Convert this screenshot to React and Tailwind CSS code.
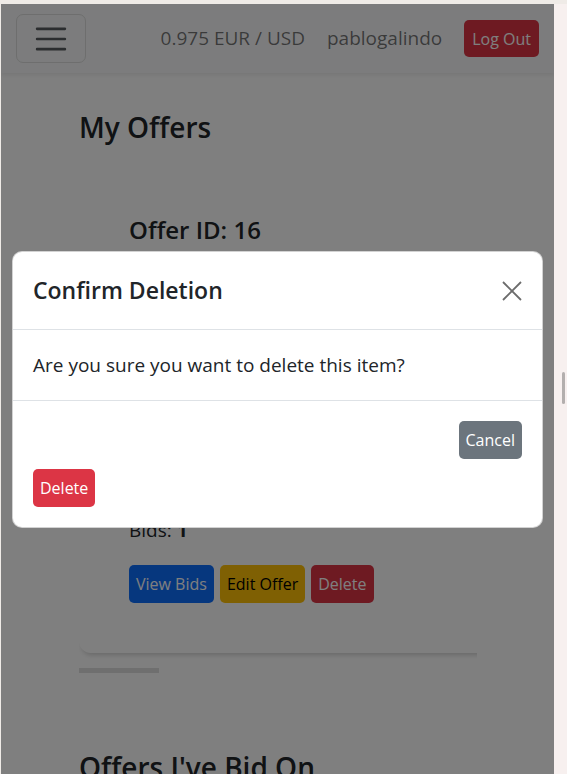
import React from 'react';

function Navbar() {
  return (
    <nav className="h-[69px] bg-[#f8f9fa] shadow-[0_2px_4px_rgba(0,0,0,0.08)] flex items-center px-[15px] relative z-10">
      <button className="w-[70px] h-[49px] border border-[#dcdcdc] rounded-[7px] flex items-center justify-center">
        <svg width="38" height="38" viewBox="0 0 30 30">
          <path d="M4 7h22M4 15h22M4 23h22" stroke="rgba(33,37,41,0.75)" strokeWidth="2" strokeLinecap="round" />
        </svg>
      </button>
      <div className="ml-auto flex items-center text-[19px] text-black/55">
        <span>0.975 EUR / USD</span>
        <span className="ml-[22px]">pablogalindo</span>
        <button className="ml-[22px] h-[37px] px-[8px] rounded-[5px] bg-[#dc3545] text-white text-[16px]">
          Log Out
        </button>
      </div>
    </nav>
  );
}

function OfferCard() {
  return (
    <div className="w-[398px] mt-[25px] pb-[8px] overflow-hidden">
      <div className="w-[440px] rounded-[12px] bg-white shadow-[0_5px_5px_-3px_rgba(0,0,0,0.18)] pt-[45px] pb-[50px] pl-[50px] text-[#212529]">
        <h5 className="text-[24px] font-semibold leading-[30px]">Offer ID: 16</h5>
        {/* offer details sit here, covered by the dialog */}
        <div className="h-[270px]" />
        <p className="text-[19px] leading-[30px]">
          Bids: <strong className="font-bold">1</strong>
        </p>
        <div className="mt-[20px] flex gap-[6px] text-[16px]">
          <button className="h-[38px] px-[7px] rounded-[5px] bg-[#0d6efd] text-white">View Bids</button>
          <button className="h-[38px] px-[7px] rounded-[5px] bg-[#ffc107] text-black">Edit Offer</button>
          <button className="h-[38px] px-[7px] rounded-[5px] bg-[#dc3545] text-white">Delete</button>
        </div>
      </div>
    </div>
  );
}

function Content() {
  return (
    <div className="px-[78px] text-[#212529]">
      <h3 className="mt-[37px] text-[28px] font-semibold leading-[35px]">My Offers</h3>
      <OfferCard />
      <div className="mt-[7px] w-[80px] h-[5px] bg-[#dedede]" />
      <h3 className="mt-[77px] text-[28px] font-semibold leading-[35px] whitespace-nowrap">Offers I've Bid On</h3>
    </div>
  );
}

function ConfirmModal() {
  return (
    <div className="bg-white border border-black/[0.175] rounded-[10px] text-[#212529]">
      <div className="flex items-center justify-between px-[20px] py-[20px] border-b border-[#dee2e6]">
        <h5 className="text-[23px] font-semibold leading-[37px]">Confirm Deletion</h5>
        <button className="w-[20px] h-[20px] flex items-center justify-center">
          <svg width="20" height="20" viewBox="0 0 20 20">
            <path d="M1 1L19 19M19 1L1 19" stroke="#6c6c6c" strokeWidth="1.8" />
          </svg>
        </button>
      </div>
      <div className="p-[20px] text-[19px] leading-[30px] border-b border-[#dee2e6]">
        Are you sure you want to delete this item?
      </div>
      <div className="px-[15px] py-[15px] text-[16px]">
        <div className="flex justify-end">
          <button className="m-[5px] h-[38px] px-[7px] rounded-[5px] bg-[#6c757d] text-white">Cancel</button>
        </div>
        <div>
          <button className="m-[5px] h-[38px] px-[7px] rounded-[5px] bg-[#dc3545] text-white">Delete</button>
        </div>
      </div>
    </div>
  );
}

export default function App() {
  return (
    <div className="w-[567px] h-[774px] overflow-hidden flex flex-col bg-[#efebe7] font-['Open_Sans','Segoe_UI',sans-serif]">
      <div className="h-[4px] shrink-0" />
      <div className="flex flex-1 min-h-0">
        <div className="w-[1px] shrink-0" />
        <main className="relative w-[553px] shrink-0 bg-white overflow-hidden">
          <Navbar />
          <Content />
          <div className="absolute inset-0 z-20 bg-black/50" />
          <div className="absolute inset-0 z-30 px-[11px] pt-[247px]">
            <ConfirmModal />
          </div>
        </main>
        <div className="flex-1 bg-[#f7f0ef] pt-[368px] pl-[8px]">
          <div className="w-[3px] h-[32px] rounded-full bg-[#b3afae]" />
        </div>
      </div>
    </div>
  );
}
